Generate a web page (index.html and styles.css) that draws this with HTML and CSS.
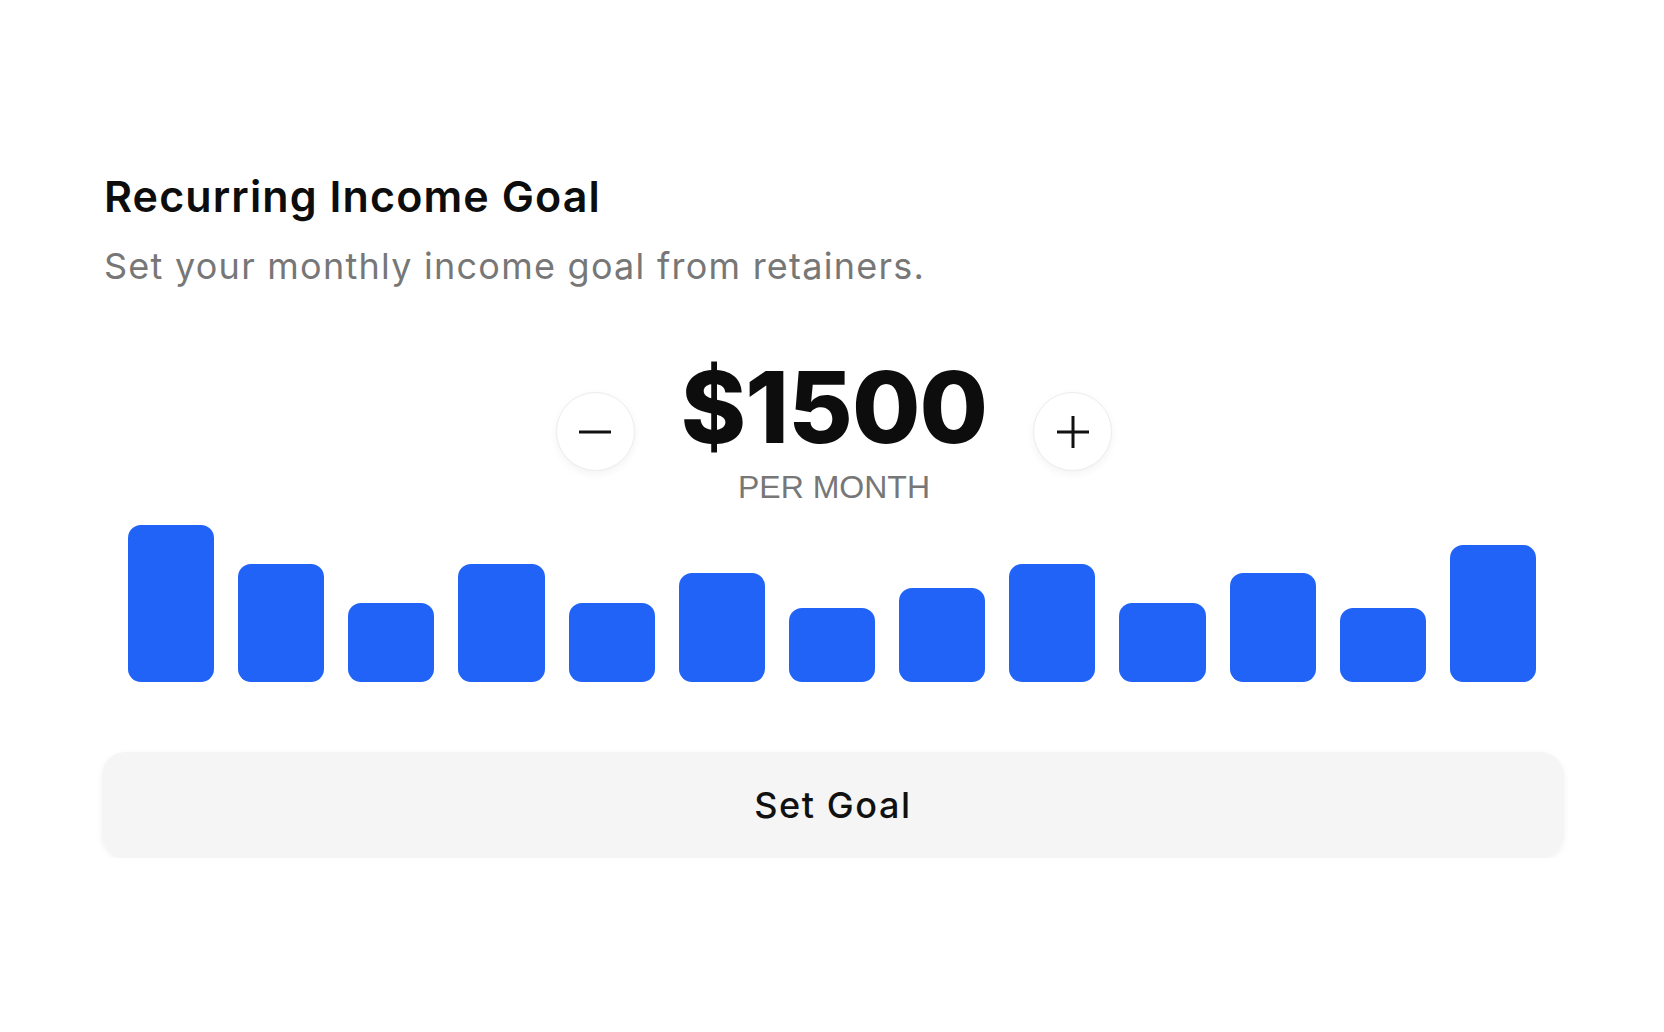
FILE: index.html
```html
<!DOCTYPE html>
<html lang="en">
<head>
<meta charset="utf-8">
<title>Recurring Income Goal</title>
<link rel="stylesheet" href="styles.css">
</head>
<body>
<main class="card">
  <h1 class="title">Recurring Income Goal</h1>
  <p class="subtitle">Set your monthly income goal from retainers.</p>
  <div class="stepper">
    <button class="circle" aria-label="Decrease">
      <svg width="34" height="34" viewBox="0 0 34 34"><path d="M1 17h32" stroke="#111" stroke-width="3" stroke-linecap="butt"/></svg>
    </button>
    <div class="value">
      <div class="amount">$1500</div>
      <div class="per">PER MONTH</div>
    </div>
    <button class="circle" aria-label="Increase">
      <svg width="34" height="34" viewBox="0 0 34 34"><path d="M1 17h32M17 1v32" stroke="#111" stroke-width="3" stroke-linecap="butt"/></svg>
    </button>
  </div>
  <div class="bars">
    <div class="bar" style="height:157px"></div>
    <div class="bar" style="height:118px"></div>
    <div class="bar" style="height:79px"></div>
    <div class="bar" style="height:118px"></div>
    <div class="bar" style="height:79px"></div>
    <div class="bar" style="height:109px"></div>
    <div class="bar" style="height:74px"></div>
    <div class="bar" style="height:94px"></div>
    <div class="bar" style="height:118px"></div>
    <div class="bar" style="height:79px"></div>
    <div class="bar" style="height:109px"></div>
    <div class="bar" style="height:74px"></div>
    <div class="bar" style="height:137px"></div>
  </div>
  <button class="cta">Set Goal</button>
</main>
</body>
</html>
```

FILE: styles.css
```css
* { box-sizing: border-box; }
html, body { margin: 0; padding: 0; background: #ffffff; }
body { font-family: Inter, "Liberation Sans", sans-serif; color: #111; }

.card {
  width: 1462px;
  margin-left: 102px;
  padding-top: 170px;
  padding-left: 2px;
  display: flex;
  flex-direction: column;
}

.title {
  margin: 0;
  font-size: 43px;
  line-height: 52px;
  font-weight: 600;
  color: #0d0d0d;
  letter-spacing: 1.1px;
}

.subtitle {
  margin: 24px 0 0;
  font-size: 36px;
  line-height: 40px;
  font-weight: 400;
  color: #777;
  letter-spacing: 1.25px;
}

.stepper {
  margin-top: 72px;
  display: flex;
  align-items: center;
  justify-content: center;
  gap: 46px;
}

.circle {
  width: 79px;
  height: 79px;
  border-radius: 50%;
  border: 1.5px solid #ececec;
  background: #fff;
  box-shadow: 0 3px 8px rgba(0, 0, 0, 0.05);
  display: flex;
  align-items: center;
  justify-content: center;
  padding: 0;
}

.value {
  display: flex;
  flex-direction: column;
  align-items: center;
}

.amount {
  font-size: 99px;
  line-height: 98px;
  font-weight: 800;
  letter-spacing: -0.8px;
  color: #0d0d0d;
}

.per {
  margin-top: 13px;
  font-family: "Liberation Sans", Arial, sans-serif;
  font-size: 32px;
  line-height: 36px;
  color: #777;
}

.bars {
  margin-top: 20px;
  padding: 0 28px 0 24px;
  height: 157px;
  display: flex;
  align-items: flex-end;
  gap: 24px;
}

.bar {
  flex: 1;
  background: #2063f6;
  border-radius: 13px;
}

.cta {
  margin-top: 70px;
  margin-left: -2px;
  height: 106px;
  width: calc(100% + 2px);
  border: none;
  border-radius: 24px;
  background: #f5f5f5;
  box-shadow: 0 2px 6px rgba(0, 0, 0, 0.06);
  font-family: Inter, "Liberation Sans", sans-serif;
  font-size: 36px;
  font-weight: 500;
  color: #111;
  letter-spacing: 1.6px;
}
```
